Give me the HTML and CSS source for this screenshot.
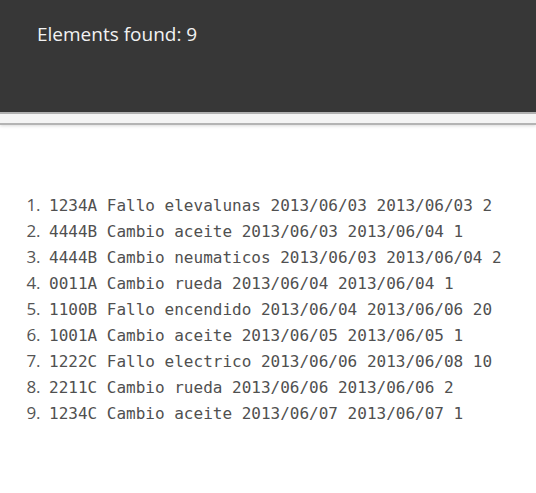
FILE: index.html
```html
<!DOCTYPE html>
<html>
<head>
<meta charset="utf-8">
<link rel="stylesheet" href="styles.css">
</head>
<body>
<header class="top">
  <h1 class="title">Elements found: 9</h1>
</header>
<div class="strip"></div>
<ol class="list">
  <li><span class="row">1234A Fallo elevalunas 2013/06/03 2013/06/03 2</span></li>
  <li><span class="row">4444B Cambio aceite 2013/06/03 2013/06/04 1</span></li>
  <li><span class="row">4444B Cambio neumaticos 2013/06/03 2013/06/04 2</span></li>
  <li><span class="row">0011A Cambio rueda 2013/06/04 2013/06/04 1</span></li>
  <li><span class="row">1100B Fallo encendido 2013/06/04 2013/06/06 20</span></li>
  <li><span class="row">1001A Cambio aceite 2013/06/05 2013/06/05 1</span></li>
  <li><span class="row">1222C Fallo electrico 2013/06/06 2013/06/08 10</span></li>
  <li><span class="row">2211C Cambio rueda 2013/06/06 2013/06/06 2</span></li>
  <li><span class="row">1234C Cambio aceite 2013/06/07 2013/06/07 1</span></li>
</ol>
</body>
</html>
```

FILE: styles.css
```css
html, body {
  margin: 0;
  padding: 0;
  background: #ffffff;
}
body {
  font-family: "Open Sans", "Noto Sans", sans-serif;
  color: #333333;
}
.top {
  background: #373737;
  height: 112px;
  box-sizing: border-box;
  padding: 20px 0 0 37px;
}
.title {
  margin: 0;
  font-family: "Open Sans", "Noto Sans", sans-serif;
  font-weight: 400;
  font-size: 19px;
  line-height: 28px;
  color: #f2f2f2;
}
.strip {
  height: 9px;
  background: #f4f4f4;
  border-top: 2px solid #b0b0b0;
  border-bottom: 2px solid #b4b4b4;
  box-shadow: 0 1px 3px rgba(0,0,0,0.15);
}
.list {
  margin: 67px 0 0 8px;
  padding: 0 0 0 37px;
  font-family: "Open Sans", "Noto Sans", sans-serif;
  font-size: 17px;
  color: #555555;
}
.list li {
  line-height: 25px;
  padding-left: 4px;
}
.list li::marker {
  font-family: "Open Sans", "Noto Sans", sans-serif;
  font-size: 17px;
  color: #555555;
}
.row {
  font-family: "DejaVu Sans Mono", "Liberation Mono", monospace;
  font-size: 16px;
  color: #505050;
}
```
